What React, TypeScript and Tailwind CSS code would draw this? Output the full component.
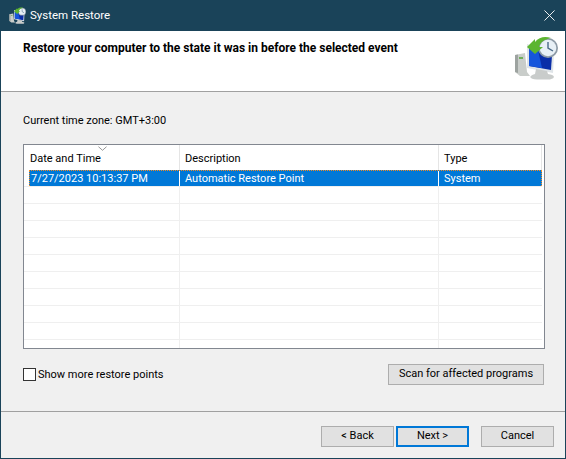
const uiFont = "font-['Roboto','Liberation_Sans',sans-serif]";

// monitor with clock and green arrow, used in title bar and header
function RestoreIcon({ className }: { className: string }) {
  return (
    <svg viewBox="0 0 44 44" className={className}>
      <path d="M1 19 L11 17 L13 36 L16 40 L6 40 L1 36 Z" fill="#c9cdca" />
      <path d="M1 19 L4 18.5 L4 37 L1 36 Z" fill="#9da3a0" />
      <rect x="5" y="21" width="4" height="2" fill="#6fae5a" />
      <path d="M13 8 L40 17 L39 37 L13 32 Z" fill="#dfe4e8" />
      <path d="M15 11 L38 19 L37 34 L15 30 Z" fill="#0a2ea8" />
      <path d="M15 11 L24 14 L28 32 L15 30 Z" fill="#1656dc" />
      <path d="M22 33 L33 35 L34 38 C41 39 42 42 36 43.5 L23 43.5 C15 43 14 40 21 38 Z" fill="#c9cccb" />
      <circle cx="34" cy="12" r="10" fill="#8d9aa6" />
      <circle cx="34" cy="12" r="8.3" fill="#e8f0f6" />
      <path d="M34 6 V12 L39 15" fill="none" stroke="#4a6a88" strokeWidth="1.4" />
      <path d="M13 11 L21 3 L21 6 C25 1 31 0 37 2 C31 3 26 6 25 11 L29 11 L21 18 Z" fill="#5cb531" />
    </svg>
  );
}

function Button({ label, primary, className }: { label: string; primary?: boolean; className: string }) {
  return (
    <button
      className={`${className} h-[21px] bg-[#e1e1e1] text-[11px] text-black ${
        primary ? "border-2 border-[#0078d7]" : "border border-[#adadad]"
      }`}
    >
      {label}
    </button>
  );
}

export default function App() {
  return (
    <div className={`${uiFont} flex h-[459px] w-[566px] flex-col border border-t-0 border-[#1a4359] bg-[#f0f0f0] text-[11px] text-black`}>
      <div className="flex h-[31px] items-center bg-[#1a4359] pl-[8px] text-white">
        <RestoreIcon className="h-[17px] w-[17px]" />
        <span className="ml-[4px] text-[11.5px]">System Restore</span>
        <svg viewBox="0 0 12 12" className="ml-auto mr-[10px] h-[11px] w-[11px]">
          <path d="M.5 .5 L11.5 11.5 M11.5 .5 L.5 11.5" stroke="#fff" strokeWidth="1" />
        </svg>
      </div>

      <div className="flex h-[60px] justify-between bg-white pl-[22px] pr-[7px]">
        <h1 className="mt-[7px] text-[12px] font-bold leading-[20px] text-black">
          Restore your computer to the state it was in before the selected event
        </h1>
        <RestoreIcon className="mt-[5px] h-[44px] w-[44px]" />
      </div>
      <div className="h-[1px] bg-[#a0a0a0]" />

      <div className="px-[22px] pt-[21px] leading-[16px]">Current time zone: GMT+3:00</div>

      <div className="relative mx-[22px] mt-[15px] h-[205px] w-[522px] overflow-hidden border border-[#828790] bg-white">
        <svg viewBox="0 0 10 5" className="absolute left-[74px] top-[1px] h-[5px] w-[9px]">
          <path d="M.5 .5 L5 4.5 L9.5 .5" fill="none" stroke="#8a8a8a" />
        </svg>
        <div className="flex h-[25px] w-[518px] leading-[16px]">
          <div className="w-[156px] border-r border-[#e5e5e5] pl-[6px] pt-[6px]">Date and Time</div>
          <div className="w-[259px] border-r border-[#e5e5e5] pl-[5px] pt-[6px]">Description</div>
          <div className="flex-1 border-r border-[#e5e5e5] pl-[5px] pt-[6px]">Type</div>
        </div>
        <div className="flex h-[16px] w-[518px] pl-[5px] leading-[16px] text-white">
          <div className="flex flex-1 border border-b-0 border-dotted border-[#f58a1f] bg-[#0078d7]">
            <div className="w-[150px] border-r border-white pl-[1px]">7/27/2023 10:13:37 PM</div>
            <div className="w-[259px] border-r border-white pl-[5px]">Automatic Restore Point</div>
            <div className="flex-1 pl-[5px]">System</div>
          </div>
        </div>
        {Array.from({ length: 10 }).map((_, i) => (
          <div key={i} className="flex h-[17px] w-[518px] border-t border-[#efefef]">
            <div className="w-[156px] border-r border-[#efefef]" />
            <div className="w-[259px] border-r border-[#efefef]" />
          </div>
        ))}
      </div>

      <div className="mt-[15px] flex items-center justify-between pl-[22px] pr-[21px]">
        <label className="flex items-center leading-[16px]">
          <span className="h-[13px] w-[13px] border border-[#333] bg-white" />
          <span className="ml-[2px]">Show more restore points</span>
        </label>
        <Button label="Scan for affected programs" className="w-[156px]" />
      </div>

      <div className="mt-[26px] h-[1px] bg-[#a0a0a0]" />

      <div className="mt-[14px] flex pr-[11px]">
        <div className="ml-auto flex">
          <Button label="< Back" className="w-[73px]" />
          <Button label="Next >" primary className="ml-[2px] w-[73px]" />
          <Button label="Cancel" className="ml-[12px] w-[73px]" />
        </div>
      </div>
    </div>
  );
}
